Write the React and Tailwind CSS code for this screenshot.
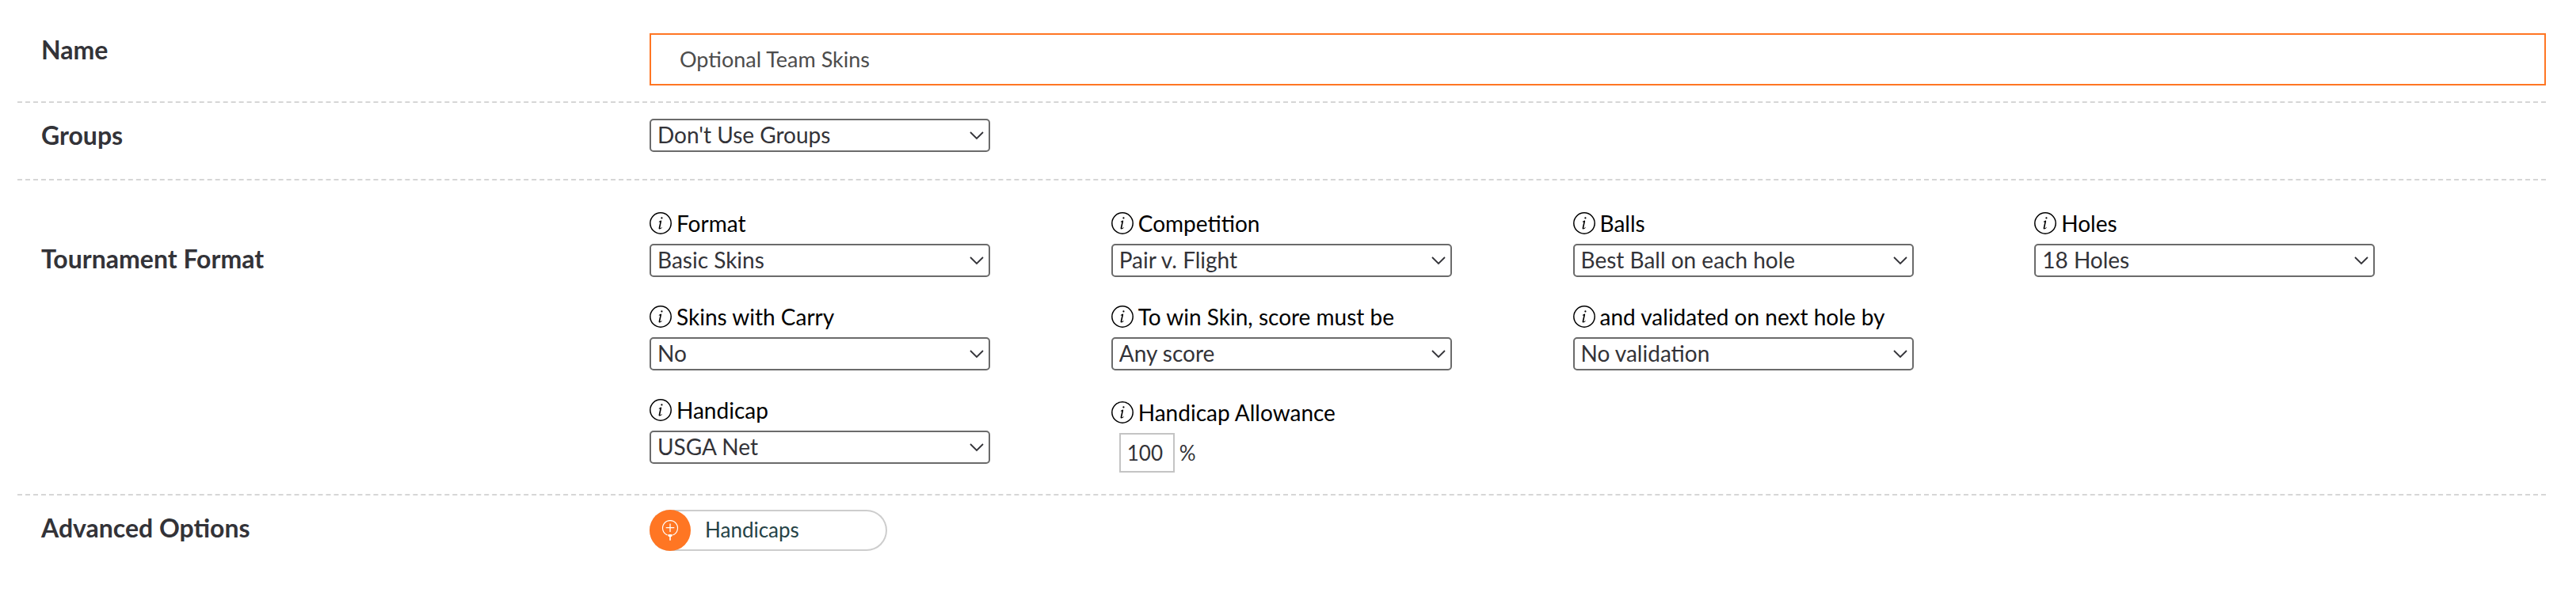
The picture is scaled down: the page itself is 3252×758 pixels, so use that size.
import React, { useId } from "react";

function InfoIcon() {
  return (
    <svg className="size-7 shrink-0" viewBox="0 0 28 28" fill="none" stroke="#000" aria-hidden="true">
      <circle cx="14" cy="14" r="13.2" strokeWidth="1.5" />
      <circle cx="15.4" cy="7.4" r="1.1" fill="#000" stroke="none" />
      <path
        d="M11.7 12.2C12.6 11.5 13.9 10.7 14.6 10.6C15.3 10.6 15.2 11.3 15 12L13.5 18.9C13.3 19.9 13.5 20.3 14 20.1C14.5 19.9 15.1 19.4 15.6 18.9L15.9 19.3C14.9 20.6 13.6 21.6 12.6 21.6C11.7 21.6 11.4 20.8 11.7 19.4L13.1 13.2C13.3 12.4 13.1 12.2 12.8 12.4L11.9 12.8Z"
        fill="#000"
        stroke="none"
      />
    </svg>
  );
}

function TeeIcon() {
  return (
    <svg className="size-13 shrink-0" viewBox="0 0 52 52" fill="none" stroke="#fff" aria-hidden="true">
      <circle cx="26" cy="26" r="26" fill="#ff7623" stroke="none" />
      <path d="M22.4 31.9A9.5 9.5 0 1 1 29.6 31.9" strokeWidth="1.2" />
      <path d="M26 17.4V28M20.7 22.7H31.3" strokeWidth="1.3" />
      <path d="M22.8 31.4Q26 30.7 29.2 31.4L28.3 33.4L26.8 34.2V38.8H25.2V34.2L23.7 33.4Z" fill="#fff" stroke="none" />
    </svg>
  );
}

function Select({ id, value }) {
  return (
    <div className="relative w-[430px] max-w-full">
      <select
        id={id}
        className="block h-[42px] w-full appearance-none rounded-[5px] border-2 border-[#6b6b6b] bg-white pr-10 pb-[3px] pl-2 text-[28px] leading-[34px] text-[#333338]"
      >
        <option>{value}</option>
      </select>
      <svg
        className="pointer-events-none absolute top-4 right-2 h-3 w-[18px]"
        viewBox="0 0 18 12"
        fill="none"
        stroke="#333338"
        strokeWidth="1.8"
        aria-hidden="true"
      >
        <path d="M1 1L9 9L17 1" />
      </svg>
    </div>
  );
}

function FieldLabel({ htmlFor, children }) {
  return (
    <label htmlFor={htmlFor} className="flex items-center gap-[6px] text-[28px] leading-7 whitespace-nowrap text-black">
      <InfoIcon />
      {children}
    </label>
  );
}

function Field({ label, value, className = "" }) {
  const id = useId();
  return (
    <div className={`flex flex-col gap-3 ${className}`}>
      <FieldLabel htmlFor={id}>{label}</FieldLabel>
      <Select id={id} value={value} />
    </div>
  );
}

const section = "grid grid-cols-4 items-start";
const ruled = "border-b-2 border-dashed border-[#d6d6d6]";
const heading = "pl-[30px] text-[32px] leading-[42px] font-bold text-[#333338]";

export default function App() {
  return (
    <form className="bg-white pr-[38px] pl-[22px] font-['Lato',sans-serif] text-[#333338]">
      <div className={`${section} ${ruled} pt-[42px] pb-5`}>
        <label htmlFor="name" className={heading}>Name</label>
        <input
          id="name"
          type="text"
          defaultValue="Optional Team Skins"
          className="col-span-3 h-[66px] w-full border-2 border-[#ff7623] bg-white px-9 pb-[2px] text-[27px] text-[#4c4c4c] outline-none"
        />
      </div>

      <div className={`${section} ${ruled} pt-5 pb-[34px]`}>
        <label htmlFor="groups" className={heading}>Groups</label>
        <div className="col-span-3">
          <Select id="groups" value="Don't Use Groups" />
        </div>
      </div>

      <div className={`${section} ${ruled} pt-10 pb-[27px]`}>
        <h2 className={`${heading} pt-[38px]`}>Tournament Format</h2>
        <div className="col-span-3 grid grid-cols-4 items-start gap-y-9 pr-[63px]">
          <Field label="Format" value="Basic Skins" />
          <Field label="Competition" value="Pair v. Flight" />
          <Field label="Balls" value="Best Ball on each hole" />
          <Field label="Holes" value="18 Holes" />
          <Field label="Skins with Carry" value="No" />
          <Field label="To win Skin, score must be" value="Any score" />
          <Field label="and validated on next hole by" value="No validation" />
          <Field label="Handicap" value="USGA Net" className="col-start-1" />
          <div className="flex flex-col gap-3 pt-[3px]">
            <FieldLabel htmlFor="allowance">Handicap Allowance</FieldLabel>
            <div className="flex items-center gap-[6px] pl-[10px] text-[26px] leading-8">
              <input
                id="allowance"
                type="text"
                defaultValue="100"
                className="h-[50px] w-[70px] border-2 border-[#c4c4c4] bg-white pl-2 text-[26px]"
              />
              <span>%</span>
            </div>
          </div>
        </div>
      </div>

      <div className={`${section} pt-[18px] pb-14`}>
        <h2 className={`${heading} pt-[2px]`}>Advanced Options</h2>
        <div className="col-span-3">
          <button
            type="button"
            className="flex h-13 w-[300px] items-center gap-[18px] rounded-full text-[26px] leading-8 text-[#264346] shadow-[inset_0_0_0_2px_#cdcdcd]"
          >
            <TeeIcon />
            <span className="pb-[3px]">Handicaps</span>
          </button>
        </div>
      </div>
    </form>
  );
}
